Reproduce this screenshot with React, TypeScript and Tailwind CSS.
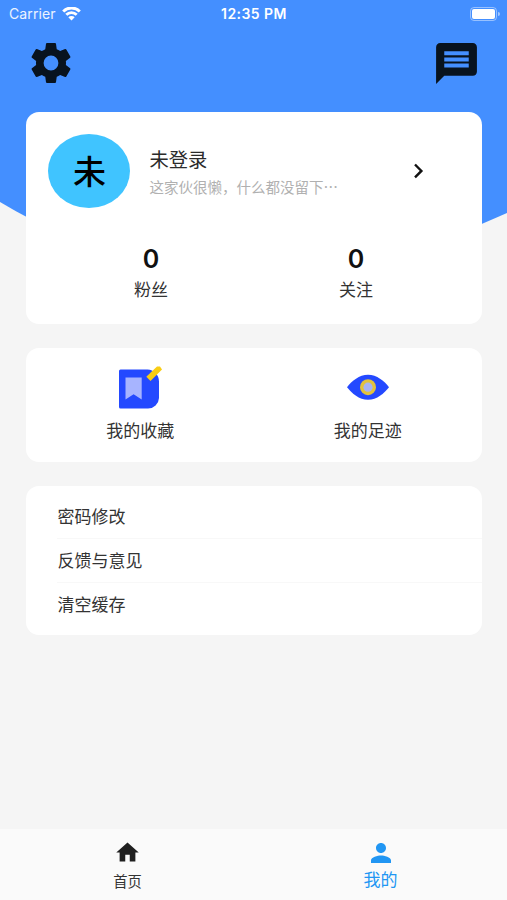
import type { ReactNode } from "react";
import { MdMessage, MdPerson } from "react-icons/md";

const cjk = "font-['Noto_Sans_CJK_SC',sans-serif]";

function Stat({ value, label, className }: { value: string; label: string; className: string }) {
  return (
    <div className={`flex flex-col items-center ${className}`}>
      <span className="font-['Inter',sans-serif] text-[25px] leading-[30px] font-semibold text-[#111]">{value}</span>
      <span className="mt-[2px] text-[17px] leading-[25px] text-[#333]">{label}</span>
    </div>
  );
}

function Shortcut({ icon, label }: { icon: ReactNode; label: string }) {
  return (
    <div className="flex flex-1 flex-col items-center pt-4">
      {icon}
      <span className="mt-[7px] text-[17px] leading-[25px] text-[#333]">{label}</span>
    </div>
  );
}

function SettingsIcon() {
  return (
    <svg className="block" width="48" height="48" viewBox="0 0 24 24" fill="currentColor">
      <path d="M19.43 12.98c.04-.32.07-.64.07-.98s-.03-.66-.07-.98l2.110-1.650c.19-.15.24-.42.12-.64l-2-3.460c-.12-.22-.39-.3-.61-.22l-2.490 1c-.52-.4-1.080-.73-1.690-.98l-.38-2.650C14.460 2.180 14.250 2 14 2h-4c-.25 0-.46.18-.49.42l-.38 2.650c-.61.25-1.170.59-1.690.98l-2.490-1c-.23-.09-.49 0-.61.22l-2 3.460c-.13.22-.07.49.12.64l2.110 1.650c-.04.32-.07.65-.07.98s.03.66.07.98l-2.110 1.650c-.19.15-.24.42-.12.64l2 3.460c.12.22.39.3.61.22l2.490-1c.52.4 1.080.73 1.690.98l.38 2.650c.03.24.24.42.49.42h4c.25 0 .46-.18.49-.42l.38-2.650c.61-.25 1.170-.59 1.690-.98l2.490 1c.23.09.49 0 .61-.22l2-3.460c.12-.22.07-.49-.12-.64l-2.110-1.650zM12 15.700a3.700 3.700 0 1 1 0-7.400 3.700 3.700 0 0 1 0 7.400z" />
    </svg>
  );
}

function BookmarkIcon() {
  return (
    <svg className="block" width="46" height="46" viewBox="0 0 46 46">
      <path d="M3.500 5.500h27a12 12 0 0 1 11.500 12v16.500a11 11 0 0 1-11 10.500h-27.500a1.500 1.500 0 0 1-1.500-1.500v-36a1.500 1.500 0 0 1 1.500-1.500z" fill="#2449ff" />
      <path d="M8.500 13.500h16.200v22l-8.100-5.200-8.100 5.200z" fill="#a7b4ff" />
      <path d="M40 2.500h3l2 3-11.500 11.500-4.200-4.200z" fill="#f9cd14" />
    </svg>
  );
}

function EyeIcon() {
  return (
    <svg className="block" width="46" height="46" viewBox="0 0 46 46">
      <path d="M2 23.200C7 17 14 10.800 23 10.800S39 17 44 23.200C39 29.500 32 35.700 23 35.700S7 29.500 2 23.200z" fill="#2449ff" />
      <circle cx="23" cy="23.200" r="8" fill="#e3c23c" />
      <circle cx="23" cy="23.200" r="4.600" fill="#a7b4f5" />
    </svg>
  );
}

export default function App() {
  return (
    <div className={`relative flex h-[900px] w-[507px] flex-col overflow-hidden bg-[#f5f5f5] ${cjk}`}>
      <svg className="absolute top-0 left-0" width="507" height="300" viewBox="0 0 507 300">
        <path d="M0 0H507V213Q230 340 0 202Z" fill="#448fff" />
      </svg>

      <header className="relative flex h-7 shrink-0 items-center justify-between pr-[7px] pl-[9px] font-['Inter',sans-serif] text-white">
        <div className="flex w-[100px] items-center gap-[6px]">
          <span className="text-[14px] leading-5 tracking-[0.1px] text-white/90">Carrier</span>
          <svg width="19" height="15" viewBox="0 0 19 15" fill="none" stroke="white" strokeWidth="2.900">
            <path d="M1.200 4.400a11.700 11.700 0 0 1 16.600 0M4.300 7.800a7.400 7.400 0 0 1 10.400 0" />
            <path d="M9.500 13.500 6.300 10.300a4.500 4.500 0 0 1 6.400 0z" fill="white" stroke="none" />
          </svg>
        </div>
        <span className="text-[14px] leading-5 font-semibold tracking-[0.45px]">12:35 PM</span>
        <div className="flex w-[101px] items-center justify-end gap-px">
          <div className="flex h-[14px] w-[27px] rounded-[4px] border border-white/45 p-px">
            <div className="flex-1 rounded-[2px] bg-white" />
          </div>
          <div className="h-1 w-[2px] rounded-r bg-white/50" />
        </div>
      </header>

      <div className="relative flex h-[84px] shrink-0 justify-between pt-[11px] pr-[26px] pl-[27px] text-[#08131f]">
        <SettingsIcon />
        <MdMessage size={49} />
      </div>

      <main className="relative flex flex-1 flex-col gap-6 pr-[25.500px] pl-[26.400px]">
        <section className="h-[212px] rounded-[13px] bg-white pt-[22px]">
          <div className="flex items-center pr-[51px] pl-[22px]">
            <div className="flex h-[74px] w-[82px] items-center justify-center rounded-[50%] bg-[#40c4ff] pb-px text-[33px] leading-none font-medium text-black">
              未
            </div>
            <div className="ml-[19px] flex flex-1 flex-col">
              <span className="text-[19.300px] leading-7 text-[#2b2b2b]">未登录</span>
              <span className="mt-[3px] text-[14.500px] leading-[22px] whitespace-nowrap text-[#b0b0b0]">这家伙很懒，什么都没留下…</span>
            </div>
            <svg className="mr-1" width="18" height="18" viewBox="0 0 18 18" fill="none" stroke="#111" strokeWidth="2.400">
              <path d="M6 2.500 12.400 8.900 6 15.300" />
            </svg>
          </div>
          <div className="flex pt-[36px] pl-[22px]">
            <Stat value="0" label="粉丝" className="w-[205px]" />
            <Stat value="0" label="关注" className="w-[205px]" />
          </div>
        </section>

        <section className="flex h-[114px] rounded-[13px] bg-white">
          <Shortcut icon={<BookmarkIcon />} label="我的收藏" />
          <Shortcut icon={<EyeIcon />} label="我的足迹" />
        </section>

        <section className="flex h-[149px] flex-col rounded-[13px] bg-white pt-[9px] pl-[31px] text-[17px] text-[#333]">
          <div className="flex h-11 items-center border-b border-[#f8f8f8] pb-px">密码修改</div>
          <div className="flex h-11 items-center border-b border-[#f8f8f8] pb-px">反馈与意见</div>
          <div className="flex h-11 items-center pb-[2px]">清空缓存</div>
        </section>
      </main>

      <nav className="relative flex h-[71px] shrink-0 bg-[#fafafa]">
        <div className="flex flex-1 flex-col items-center pt-[10px] pl-px text-[#1f1f1f]">
          <svg width="27" height="27" viewBox="0 0 24 24" fill="currentColor">
            <path d="M10 20v-6h4v6h5v-8h3L12 3 2 12h3v8z" />
          </svg>
          <span className="mt-[5px] text-[14.300px] leading-5 text-[#333]">首页</span>
        </div>
        <div className="flex flex-1 flex-col items-center pt-[9px] text-[#2196f3]">
          <MdPerson size={30} />
          <span className="-mt-[2px] text-[17px] leading-[25px]">我的</span>
        </div>
      </nav>
    </div>
  );
}
